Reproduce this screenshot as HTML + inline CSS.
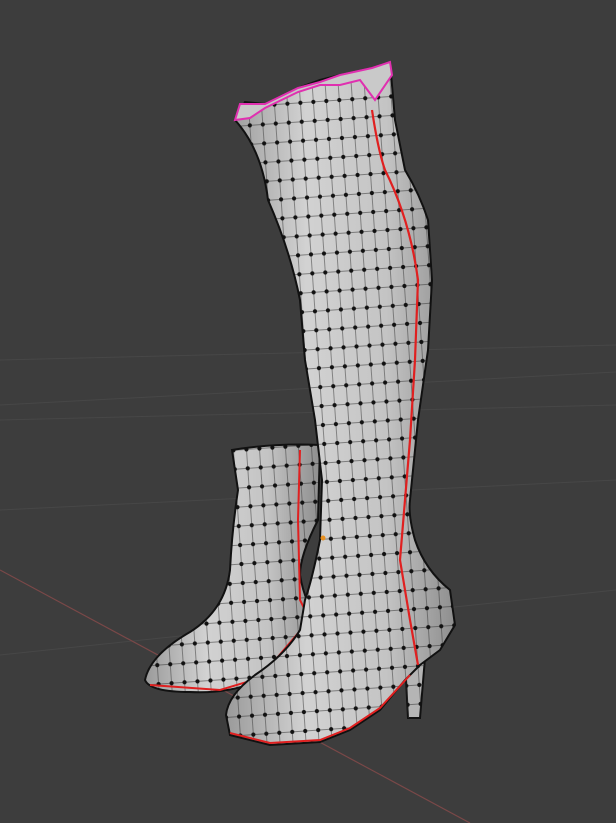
<!DOCTYPE html>
<html><head><style>html,body{margin:0;padding:0;background:#3d3d3d;overflow:hidden}svg{display:block}</style></head>
<body>
<svg width="616" height="823" viewBox="0 0 616 823" xmlns="http://www.w3.org/2000/svg">
<defs>
<linearGradient id="g" x1="0" x2="1" y1="0" y2="0">
<stop offset="0" stop-color="#9a9a9a"/><stop offset="0.35" stop-color="#d2d2d2"/><stop offset="0.7" stop-color="#c4c4c4"/><stop offset="1" stop-color="#8e8e8e"/>
</linearGradient>
<pattern id="m" width="13" height="19" patternUnits="userSpaceOnUse" patternTransform="rotate(-4)">
<path d="M0 9.5H13M6.5 0V19" stroke="#333" stroke-width="0.7" opacity="0.7"/>
<circle cx="6.5" cy="9.5" r="2.1" fill="#111"/>
</pattern>
</defs>
<rect width="616" height="823" fill="#3d3d3d"/>
<g stroke="#474747" stroke-width="1">
<line x1="0" y1="360" x2="616" y2="345"/><line x1="0" y1="420" x2="616" y2="405"/>
<line x1="0" y1="510" x2="616" y2="480"/><line x1="0" y1="655" x2="616" y2="590"/>
<line x1="0" y1="405" x2="616" y2="372"/>
</g>
<line x1="0" y1="570" x2="470" y2="823" stroke="#7a4848" stroke-width="1.2"/>
<g>
<path d="M232 450 Q275 443 320 445 L318 520 Q300 555 300 575 Q305 605 320 620 Q290 650 260 680 Q230 694 190 692 Q150 692 145 680 Q150 655 190 632 Q225 610 230 570 Q232 530 238 490 Z" fill="url(#g)"/>
<path d="M232 450 Q275 443 320 445 L318 520 Q300 555 300 575 Q305 605 320 620 Q290 650 260 680 Q230 694 190 692 Q150 692 145 680 Q150 655 190 632 Q225 610 230 570 Q232 530 238 490 Z" fill="url(#m)" stroke="#111" stroke-width="2"/>
<path d="M300 450 L298 520 L300 600 L310 620" stroke="#e02020" stroke-width="2" fill="none"/>
<path d="M150 685 L220 690 L260 678 L305 625" stroke="#e02020" stroke-width="2" fill="none"/>
</g>
<g>
<path d="M405 660 L425 658 L420 718 L408 718 Z" fill="#b5b5b5" stroke="#111" stroke-width="2"/>
<path d="M405 660 L425 658 L420 718 L408 718 Z" fill="url(#m)"/>
<path d="M235 120 Q262 150 268 200 Q290 250 300 300 L305 360 L315 420 L322 480 L320 540 Q312 580 305 600 L300 630 Q285 655 255 675 Q228 695 226 715 L230 735 L270 745 L320 742 L350 730 L380 710 L405 680 L420 665 L440 650 L455 625 L450 590 Q425 570 415 540 Q408 515 410 500 L418 420 L428 350 L432 280 L428 220 Q420 195 405 170 L395 120 L390 62 L372 68 L340 75 L320 80 L298 88 L265 104 L245 102 Z" fill="url(#g)"/>
<path d="M235 120 Q262 150 268 200 Q290 250 300 300 L305 360 L315 420 L322 480 L320 540 Q312 580 305 600 L300 630 Q285 655 255 675 Q228 695 226 715 L230 735 L270 745 L320 742 L350 730 L380 710 L405 680 L420 665 L440 650 L455 625 L450 590 Q425 570 415 540 Q408 515 410 500 L418 420 L428 350 L432 280 L428 220 Q420 195 405 170 L395 120 L390 62 L372 68 L340 75 L320 80 L298 88 L265 104 L245 102 Z" fill="url(#m)" stroke="#111" stroke-width="2"/>
<path d="M372 110 Q378 150 385 170 Q410 220 418 280 L415 360 L410 440 L405 500 L400 560 L410 620 L418 665" stroke="#e02020" stroke-width="2.2" fill="none"/>
<path d="M230 733 L270 743 L320 740 L350 728 L380 708 L410 675" stroke="#e02020" stroke-width="2" fill="none"/>
<path d="M235 120 L240 104 L258 104 L265 104 L298 88 L320 82 L340 75 L372 68 L390 62 L392 75 L375 100 L360 80 L340 85 L320 85 L298 92 L265 108 L250 118 Z" fill="#c9c9c9" stroke="#e030b0" stroke-width="2"/>
<circle cx="323" cy="538" r="2.5" fill="#e89020"/>
</g>
</svg>
</body></html>
